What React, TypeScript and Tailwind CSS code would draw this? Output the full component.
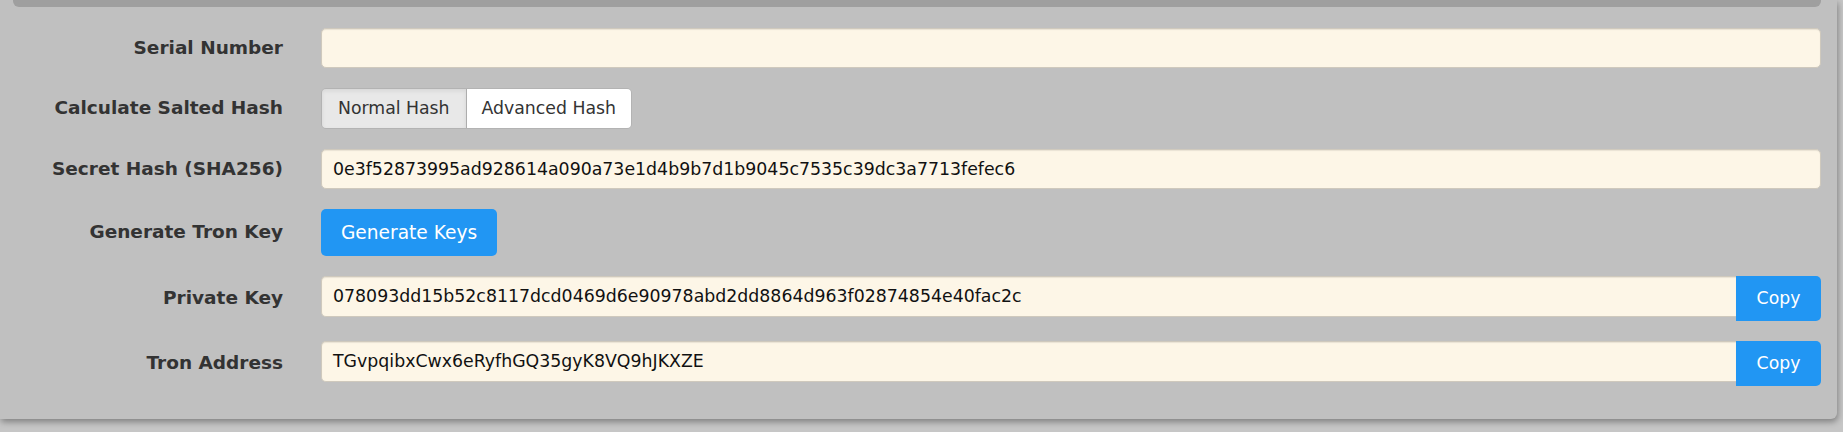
import React from "react";

const font = { fontFamily: '"DejaVu Sans", Verdana, sans-serif' };

function Label({ children }: { children: React.ReactNode }) {
  return (
    <div className="text-right font-bold text-[18.5px] text-[#333333] leading-none whitespace-nowrap">
      {children}
    </div>
  );
}

function Field({ value }: { value?: string }) {
  return (
    <div className="h-[40px] rounded-[5px] border border-[#cfc9bd] bg-[#fdf6e7] shadow-[inset_0_1px_1px_rgba(0,0,0,0.08)] flex items-center pl-[11px] text-[17.35px] text-[#111111] whitespace-nowrap overflow-hidden">
      {value}
    </div>
  );
}

function CopyField({ value }: { value: string }) {
  return (
    <div className="flex items-start">
      <div className="flex-1 h-[41px] rounded-l-[5px] border border-r-0 border-[#cfc9bd] bg-[#fdf6e7] shadow-[inset_0_1px_1px_rgba(0,0,0,0.08)] flex items-center pl-[11px] text-[17.35px] text-[#111111] whitespace-nowrap overflow-hidden">
        {value}
      </div>
      <button className="w-[85px] h-[45px] rounded-r-[5px] bg-[#2196f3] text-white text-[17.3px] flex items-center justify-center">
        Copy
      </button>
    </div>
  );
}

export default function App() {
  return (
    <div className="w-[1843px] h-[432px] overflow-hidden bg-[#c6c6c6]" style={font}>
      <div className="w-[1837px] h-[419px] bg-[#c0c0c0] rounded-br-[6px] shadow-[1px_3px_6px_rgba(0,0,0,0.35)]">
        <div className="ml-[13px] mr-[16px] h-[7px] bg-[#9f9f9f] rounded-b-[6px]" />
        <div className="pt-[21px] pr-[16px] flex flex-col gap-[20px]">
          <div className="grid grid-cols-[283px_1fr] gap-x-[38px] items-center">
            <Label>Serial Number</Label>
            <Field />
          </div>
          <div className="grid grid-cols-[283px_1fr] gap-x-[38px] items-center">
            <Label>Calculate Salted Hash</Label>
            <div className="flex">
              <div className="flex h-[41px] rounded-[5px] border border-[#b3b3b3] overflow-hidden text-[17.3px] text-[#333333]">
                <button className="px-[16px] bg-[#e8e8e8] shadow-[inset_0_2px_4px_rgba(0,0,0,0.08)] border-r border-[#adadad] flex items-center">
                  Normal Hash
                </button>
                <button className="px-[15px] bg-white flex items-center">
                  Advanced Hash
                </button>
              </div>
            </div>
          </div>
          <div className="grid grid-cols-[283px_1fr] gap-x-[38px] items-center">
            <Label>Secret Hash (SHA256)</Label>
            <Field value="0e3f52873995ad928614a090a73e1d4b9b7d1b9045c7535c39dc3a7713fefec6" />
          </div>
          <div className="grid grid-cols-[283px_1fr] gap-x-[38px] items-center">
            <Label>Generate Tron Key</Label>
            <div className="flex">
              <button className="h-[47px] w-[176px] rounded-[5px] bg-[#2196f3] text-white text-[18.6px] flex items-center justify-center">
                Generate Keys
              </button>
            </div>
          </div>
          <div className="grid grid-cols-[283px_1fr] gap-x-[38px] items-center">
            <Label>Private Key</Label>
            <CopyField value="078093dd15b52c8117dcd0469d6e90978abd2dd8864d963f02874854e40fac2c" />
          </div>
          <div className="grid grid-cols-[283px_1fr] gap-x-[38px] items-center">
            <Label>Tron Address</Label>
            <CopyField value="TGvpqibxCwx6eRyfhGQ35gyK8VQ9hJKXZE" />
          </div>
        </div>
      </div>
    </div>
  );
}
